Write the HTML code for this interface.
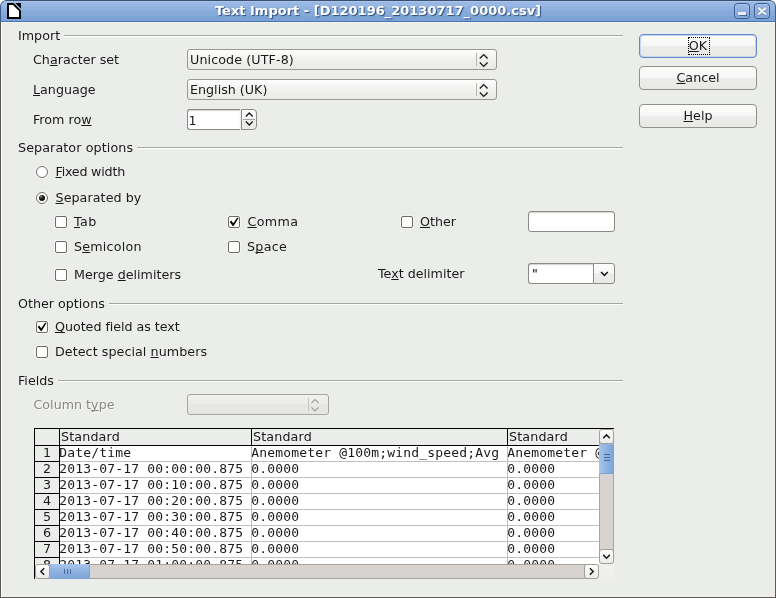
<!DOCTYPE html>
<html>
<head>
<meta charset="utf-8">
<title>Text Import</title>
<style>
html,body{margin:0;padding:0;}
body{width:776px;height:598px;overflow:hidden;background:#fff;font-family:"DejaVu Sans","Liberation Sans",sans-serif;font-size:12.7px;color:#1a1a1a;}
#win{will-change:transform;position:absolute;left:0;top:0;width:776px;height:598px;background:#ebedea;border-radius:6px 6px 0 0;overflow:hidden;}
#frame{position:absolute;left:0;top:22px;width:774px;height:575px;border:1px solid #5b5856;border-top:none;box-sizing:content-box;pointer-events:none;box-shadow:inset 1px 0 0 #fff,inset -1px -1px 0 #f1f2ef;}
#tb{position:absolute;left:0;top:0;width:776px;height:22px;background:linear-gradient(#aac6ed 0,#aac6ed 1px,#99b8e3 1.5px,#97b6e1 5.5px,#8fb1df 6.5px,#8db0de 9.5px,#86abda 10.5px,#84a9d8 14.5px,#7ca4d7 15.5px,#7aa2d6 20px);border-radius:6px 6px 0 0;box-sizing:border-box;border:1px solid #3d5a8a;border-top-color:#3b4f6e;border-bottom:1px solid #4a75ae;}
#title{position:absolute;left:0;top:2px;width:756px;text-align:center;font-weight:bold;font-size:13px;line-height:18px;color:#fff;text-shadow:1px 1px 1px #2c4a78;white-space:pre;}
.a{position:absolute;white-space:pre;line-height:16px;height:16px;margin-top:1px;}
.u{text-decoration:underline;text-underline-offset:1px;text-decoration-skip-ink:none;text-decoration-thickness:1px;}
.hl{position:absolute;height:1px;background:#a3a5a2;box-shadow:0 1px 0 #fff;}
.combo{position:absolute;box-sizing:border-box;border:1px solid #9c9792;border-radius:3px;background:linear-gradient(#fdfdfd,#f1f1ef 50%,#e9e9e6);}
.combo .t{position:absolute;left:2px;top:2px;line-height:16px;white-space:pre;}
.entry{position:absolute;box-sizing:border-box;border:1px solid #8f8a85;border-radius:3px;background:#fff;box-shadow:inset 0 1px 1px #d5d3d0;}
.btn{position:absolute;box-sizing:border-box;border:1px solid #948f89;border-radius:4px;background:linear-gradient(#fcfcfc,#f6f6f5 50%,#ededeb 50%,#e8e8e6);text-align:center;line-height:22px;}
.cb{position:absolute;box-sizing:border-box;width:12px;height:12px;border:1px solid #706a66;border-radius:2px;background:#fff;box-shadow:0 0 0 1px rgba(255,255,255,0.45);}
.rb{position:absolute;box-sizing:border-box;width:12px;height:12px;border:1px solid #706a66;border-radius:50%;background:#fff;box-shadow:0 0 0 1px rgba(255,255,255,0.45);}
svg{position:absolute;overflow:visible;}
#grid{position:absolute;left:34px;top:428px;width:565px;height:136px;overflow:hidden;background:#fff;}
.gh{position:absolute;height:16px;box-sizing:content-box;background:#ebedea;border-top:1px solid #000;border-bottom:1px solid #000;border-right:1px solid #000;line-height:16px;white-space:pre;}
.gh span{position:absolute;left:1px;top:0px;letter-spacing:0.14px;}
.rh{position:absolute;left:1px;width:24px;height:15px;background:#ebedea;border-right:1px solid #000;border-bottom:1px solid #000;text-align:center;line-height:13px;}

.sbtn{position:absolute;box-sizing:border-box;border:1px solid #a39e98;border-radius:3px;background:linear-gradient(#ffffff,#f4f4f3 50%,#ebebe9);}
.trk{position:absolute;box-sizing:border-box;background:#d6d3d0;border:1px solid #a9a5a0;}
.thv{position:absolute;box-sizing:border-box;border:1px solid #7da3d8;border-left-color:#a4c1ea;border-top-color:#8fb2e0;background:linear-gradient(90deg,#a6c3eb,#96b7e3 35%,#8bafde 60%,#7fa6d8);}
.thh{position:absolute;box-sizing:border-box;border:1px solid #7da3d8;border-top-color:#a4c1ea;border-left-color:#8fb2e0;background:linear-gradient(#a6c3eb,#96b7e3 35%,#8bafde 60%,#7fa6d8);}
.gc{position:absolute;height:15px;border-right:1px solid #c0c0c0;border-bottom:1px solid #c0c0c0;font-family:"DejaVu Sans Mono","Liberation Mono",monospace;font-size:13px;letter-spacing:0.174px;line-height:14px;white-space:pre;overflow:hidden;text-indent:-0.7px;}

</style>
</head>
<body>
<div id="win">
<div id="tb"></div>
<div style="position:absolute;left:1px;top:22px;width:774px;height:1px;background:#f3f4f0"></div>
<div id="title">Text Import - [D120196_20130717_0000.csv]</div>
<!-- app icon -->
<svg style="left:7px;top:3px" width="14" height="16" viewBox="0 0 14 16"><path d="M0 0H14V16H0Z" fill="#000"/><path d="M2 2H6L12 8V14H2Z" fill="#fff"/><path d="M7 -0.3L14.3 7" stroke="#a3c0ea" stroke-width="1.15" fill="none"/></svg>
<!-- window buttons -->
<div style="position:absolute;left:734px;top:3px;width:16px;height:16px;box-sizing:border-box;border:1px solid #385a92;border-radius:3.5px;background:linear-gradient(#a0bce6,#7ba2d7);box-shadow:inset 0 0 0 1px rgba(255,255,255,0.12)"></div>
<div style="position:absolute;left:738px;top:12px;width:8px;height:3px;background:#eef0ef;box-shadow:0 0 1px 0.5px #44669e"></div>
<div style="position:absolute;left:754px;top:3px;width:16px;height:16px;box-sizing:border-box;border:1px solid #385a92;border-radius:3.5px;background:linear-gradient(#a0bce6,#7ba2d7);box-shadow:inset 0 0 0 1px rgba(255,255,255,0.12)"></div>
<svg style="left:754px;top:3px" width="16" height="16" viewBox="0 0 16 16"><path d="M4.7 5.2L11.5 11M11.5 5.2L4.7 11" stroke="#5478b3" stroke-width="3.4" stroke-linecap="round" opacity="0.7"/><path d="M4.7 5.2L11.5 11M11.5 5.2L4.7 11" stroke="#f0f1ef" stroke-width="2.3" stroke-linecap="round"/></svg>

<!-- Import -->
<div class="a" style="left:18px;top:27px">Import</div>
<div class="hl" style="left:64px;top:35px;width:559px"></div>
<div class="a" style="left:33px;top:51px">Ch<span class="u">a</span>racter set</div>
<div class="combo" style="left:187px;top:49px;width:310px;height:21px"><div class="t" style="letter-spacing:0.1px">Unicode (UTF-8)</div></div>
<div style="position:absolute;left:476px;top:53px;width:1px;height:13px;background:#b9b6b1"></div><svg style="left:478px;top:49px" width="12" height="21" viewBox="0 0 12 21"><path d="M1.8 9.5L5.7 5.6L9.6 9.5M1.8 13.5L5.7 17.4L9.6 13.5" fill="none" stroke="#1a1a1a" stroke-width="1.35"/></svg>
<div class="a" style="left:33px;top:81px"><span class="u">L</span>anguage</div>
<div class="combo" style="left:187px;top:79px;width:310px;height:21px"><div class="t">English (UK)</div></div>
<div style="position:absolute;left:476px;top:83px;width:1px;height:13px;background:#b9b6b1"></div><svg style="left:478px;top:79px" width="12" height="21" viewBox="0 0 12 21"><path d="M1.8 9.5L5.7 5.6L9.6 9.5M1.8 13.5L5.7 17.4L9.6 13.5" fill="none" stroke="#1a1a1a" stroke-width="1.35"/></svg>
<div class="a" style="left:33px;top:111px">From ro<span class="u">w</span></div>
<div class="entry" style="left:187px;top:109px;width:53px;height:21px;border-radius:3px 0 0 3px;border-right:none"><div class="a" style="left:0.5px;top:2px">1</div></div>
<div class="btn" style="left:241px;top:109px;width:16px;height:21px;border-radius:0 4px 4px 0;border-color:#8f8a85"></div>
<div style="position:absolute;left:243px;top:119px;width:12px;height:1px;background:#a8a39e"></div>
<svg style="left:241px;top:109px" width="16" height="21" viewBox="0 0 16 21"><path d="M4.9 7.5L8.3 4.1L11.7 7.5M4.9 12.6L8.3 16L11.7 12.6" fill="none" stroke="#1a1a1a" stroke-width="1.4"/></svg>

<!-- Separator options -->
<div class="a" style="left:18px;top:139px;letter-spacing:0.1px">Separator options</div>
<div class="hl" style="left:137px;top:147px;width:486px"></div>
<div class="rb" style="left:36px;top:166px"></div>
<div class="a" style="left:55.5px;top:163px;letter-spacing:-0.22px"><span class="u">F</span>ixed width</div>
<div class="rb" style="left:36px;top:192px"></div><div style="position:absolute;left:39px;top:195px;width:6px;height:6px;border-radius:50%;background:radial-gradient(circle at 35% 30%,#8a8a8a 0,#1a1a1a 35%,#000 100%)"></div>
<div class="a" style="left:55.5px;top:189px;letter-spacing:0.07px"><span class="u">S</span>eparated by</div>
<div class="cb" style="left:55px;top:216px"></div>
<div class="a" style="left:74px;top:213px;letter-spacing:0.4px"><span class="u">T</span>ab</div>
<div class="cb" style="left:228px;top:216px"></div><svg style="left:228px;top:216px" width="12" height="12" viewBox="0 0 12 12"><path d="M1.7 5.9L3.2 4.5L5.2 7.2L9.3 1.6L10.4 2.3L5.7 10H4.7Z" fill="#0a0a0a"/></svg>
<div class="a" style="left:247.5px;top:213px;letter-spacing:0.36px"><span class="u">C</span>omma</div>
<div class="cb" style="left:401px;top:216px"></div>
<div class="a" style="left:420px;top:213px"><span class="u">O</span>ther</div>
<div class="entry" style="left:528px;top:211px;width:87px;height:21px"></div>
<div class="cb" style="left:55px;top:241px"></div>
<div class="a" style="left:74px;top:238px;letter-spacing:0.2px">S<span class="u">e</span>micolon</div>
<div class="cb" style="left:228px;top:241px"></div>
<div class="a" style="left:247px;top:238px;letter-spacing:0.3px">S<span class="u">p</span>ace</div>
<div class="cb" style="left:55px;top:269px"></div>
<div class="a" style="left:74px;top:266px">Merge <span class="u">d</span>elimiters</div>
<div class="a" style="left:378px;top:265px">Te<span class="u">x</span>t delimiter</div>
<div class="entry" style="left:528px;top:263px;width:65px;height:21px;border-radius:3px 0 0 3px;border-right:none"><div class="a" style="left:3px;top:1px;color:#000">"</div></div>
<div class="btn" style="left:593px;top:263px;width:22px;height:21px;border-radius:0 3px 3px 0;border-color:#8f8a85"></div>
<svg style="left:593px;top:263px" width="22" height="21" viewBox="0 0 22 21"><path d="M8 9L11.4 12.4L14.8 9" fill="none" stroke="#1a1a1a" stroke-width="1.5"/></svg>

<!-- Other options -->
<div class="a" style="left:18px;top:295px">Other options</div>
<div class="hl" style="left:109px;top:303px;width:514px"></div>
<div class="cb" style="left:36px;top:321px"></div><svg style="left:36px;top:321px" width="12" height="12" viewBox="0 0 12 12"><path d="M1.7 5.9L3.2 4.5L5.2 7.2L9.3 1.6L10.4 2.3L5.7 10H4.7Z" fill="#0a0a0a"/></svg>
<div class="a" style="left:55px;top:318px;letter-spacing:-0.04px"><span class="u">Q</span>uoted field as text</div>
<div class="cb" style="left:36px;top:346px"></div>
<div class="a" style="left:55px;top:343px;letter-spacing:0.06px">Detect special <span class="u">n</span>umbers</div>

<!-- Fields -->
<div class="a" style="left:18px;top:372px">Fields</div>
<div class="hl" style="left:58px;top:380px;width:565px"></div>
<div class="a" style="left:33.5px;top:396px;color:#8c8985;text-shadow:1px 1px 0 #fafaf9">Column t<span class="u">y</span>pe</div>
<div class="combo" style="left:187px;top:394px;width:142px;height:21px;background:linear-gradient(#f0f1ef,#eceDeb 50%,#e7e8e5 50%,#e5e6e3);border-color:#a9a49f"></div>

<div style="position:absolute;left:308px;top:398px;width:1px;height:13px;background:#c6c3bf"></div>
<svg style="left:309px;top:394px" width="12" height="21" viewBox="0 0 12 21"><path d="M2.4 9.2L6 5.6L9.6 9.2M2.4 13.4L6 17L9.6 13.4" fill="none" stroke="#9b9b97" stroke-width="1.1"/></svg>
<!-- Buttons -->
<div class="btn" style="left:639px;top:34px;width:118px;height:24px;border-color:#628cc9;box-shadow:inset 0 0 0 1px #c3d4ee"><span class="u">O</span>K</div>
<div style="position:absolute;left:688px;top:37px;width:20px;height:16px;border:1px dotted #000"></div>
<div class="btn" style="left:639px;top:66px;width:118px;height:24px"><span class="u">C</span>ancel</div>
<div class="btn" style="left:639px;top:104px;width:118px;height:24px"><span class="u">H</span>elp</div>

<!-- table -->
<div id="grid">
<div class="gh" style="left:0;top:0;width:25px"></div>
<div class="gh" style="left:26px;top:0;width:191px"><span>Standard</span></div>
<div class="gh" style="left:218px;top:0;width:255px"><span>Standard</span></div>
<div class="gh" style="left:474px;top:0;width:120px"><span>Standard</span></div>
<div class="rh" style="top:18px">1</div>
<div class="gc" style="left:26px;top:18px;width:191px">Date/time</div>
<div class="gc" style="left:218px;top:18px;width:255px">Anemometer @100m;wind_speed;Avg</div>
<div class="gc" style="left:474px;top:18px;width:120px">Anemometer @100m;wind_speed;Max</div>
<div class="rh" style="top:34px">2</div>
<div class="gc" style="left:26px;top:34px;width:191px">2013-07-17 00:00:00.875</div>
<div class="gc" style="left:218px;top:34px;width:255px">0.0000</div>
<div class="gc" style="left:474px;top:34px;width:120px">0.0000</div>
<div class="rh" style="top:50px">3</div>
<div class="gc" style="left:26px;top:50px;width:191px">2013-07-17 00:10:00.875</div>
<div class="gc" style="left:218px;top:50px;width:255px">0.0000</div>
<div class="gc" style="left:474px;top:50px;width:120px">0.0000</div>
<div class="rh" style="top:66px">4</div>
<div class="gc" style="left:26px;top:66px;width:191px">2013-07-17 00:20:00.875</div>
<div class="gc" style="left:218px;top:66px;width:255px">0.0000</div>
<div class="gc" style="left:474px;top:66px;width:120px">0.0000</div>
<div class="rh" style="top:82px">5</div>
<div class="gc" style="left:26px;top:82px;width:191px">2013-07-17 00:30:00.875</div>
<div class="gc" style="left:218px;top:82px;width:255px">0.0000</div>
<div class="gc" style="left:474px;top:82px;width:120px">0.0000</div>
<div class="rh" style="top:98px">6</div>
<div class="gc" style="left:26px;top:98px;width:191px">2013-07-17 00:40:00.875</div>
<div class="gc" style="left:218px;top:98px;width:255px">0.0000</div>
<div class="gc" style="left:474px;top:98px;width:120px">0.0000</div>
<div class="rh" style="top:114px">7</div>
<div class="gc" style="left:26px;top:114px;width:191px">2013-07-17 00:50:00.875</div>
<div class="gc" style="left:218px;top:114px;width:255px">0.0000</div>
<div class="gc" style="left:474px;top:114px;width:120px">0.0000</div>
<div class="rh" style="top:130px">8</div>
<div class="gc" style="left:26px;top:130px;width:191px">2013-07-17 01:00:00.875</div>
<div class="gc" style="left:218px;top:130px;width:255px">0.0000</div>
<div class="gc" style="left:474px;top:130px;width:120px">0.0000</div>
</div>
<div style="position:absolute;left:34px;top:428px;width:1px;height:151px;background:#000"></div>
<!-- scrollbars -->
<div style="position:absolute;left:599px;top:428px;width:15px;height:1px;background:#000"></div>
<div style="position:absolute;left:599px;top:564px;width:16px;height:16px;background:#eff0ee"></div>
<div class="trk" style="left:599px;top:436px;width:15px;height:120px"></div>
<div class="sbtn" style="left:599px;top:429px;width:15px;height:15px"></div>
<svg style="left:599px;top:429px" width="15" height="15" viewBox="0 0 15 15"><path d="M4.2 9.2L7.5 5.9L10.8 9.2" fill="none" stroke="#1a1a1a" stroke-width="1.5"/></svg>
<div class="thv" style="left:599px;top:444px;width:15px;height:30px"></div>
<div style="position:absolute;left:604px;top:454px;width:6px;height:1px;background:#48699b"></div>
<div style="position:absolute;left:604px;top:457px;width:6px;height:1px;background:#48699b"></div>
<div style="position:absolute;left:604px;top:460px;width:6px;height:1px;background:#48699b"></div>
<div class="sbtn" style="left:599px;top:549px;width:15px;height:15px"></div>
<svg style="left:599px;top:549px" width="15" height="15" viewBox="0 0 15 15"><path d="M4.2 5.9L7.5 9.2L10.8 5.9" fill="none" stroke="#1a1a1a" stroke-width="1.5"/></svg>
<div class="trk" style="left:42px;top:564px;width:550px;height:15px"></div>
<div class="sbtn" style="left:35px;top:564px;width:15px;height:15px"></div>
<svg style="left:35px;top:564px" width="15" height="15" viewBox="0 0 15 15"><path d="M9.2 4.2L5.9 7.5L9.2 10.8" fill="none" stroke="#1a1a1a" stroke-width="1.5"/></svg>
<div class="thh" style="left:50px;top:564px;width:40px;height:15px"></div>
<div style="position:absolute;left:64px;top:569px;width:1px;height:5px;background:#48699b"></div>
<div style="position:absolute;left:67px;top:569px;width:1px;height:5px;background:#48699b"></div>
<div style="position:absolute;left:70px;top:569px;width:1px;height:5px;background:#48699b"></div>
<div class="sbtn" style="left:584px;top:564px;width:15px;height:15px"></div>
<svg style="left:584px;top:564px" width="15" height="15" viewBox="0 0 15 15"><path d="M5.9 4.2L9.2 7.5L5.9 10.8" fill="none" stroke="#1a1a1a" stroke-width="1.5"/></svg>
<div id="frame"></div>
</div>
</body>
</html>
